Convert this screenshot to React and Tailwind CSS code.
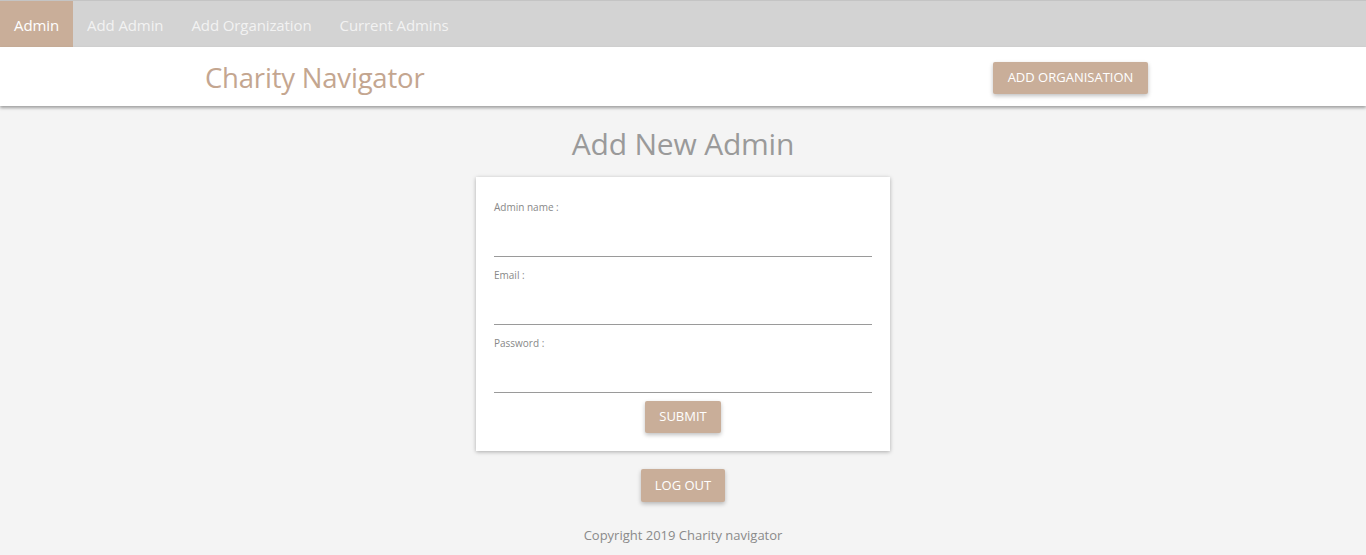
const tabs = ["Admin", "Add Admin", "Add Organization", "Current Admins"];

const fields = [
  { label: "Admin name :", type: "text" },
  { label: "Email :", type: "email" },
  { label: "Password :", type: "password" },
];

const btn =
  "bg-[#c9ae99] text-white uppercase rounded-[2px] shadow-[0_2px_4px_rgba(0,0,0,0.25)]";

const App = () => {
  return (
    <div className="min-h-[555px] bg-[#f4f4f4] font-['Open_Sans',sans-serif]">
      {/* Top tabs */}
      <nav className="flex h-[47px] bg-[#d3d3d3] border-t border-[#c4c4c4]">
        {tabs.map((t, i) => (
          <a
            key={t}
            className={`flex items-center pt-[2px] px-[14px] text-[15px] tracking-[-0.1px] ${
              i === 0 ? "bg-[#c9ae99] text-white" : "text-[#f2f2f2]"
            }`}
          >
            {t}
          </a>
        ))}
      </nav>

      {/* Header */}
      <header className="h-[59px] bg-white shadow-[0_2px_3px_rgba(0,0,0,0.35)] relative">
        <div className="ml-[205px] w-[943px] h-full flex items-center justify-between pt-[2px]">
          <h1 className="text-[27.5px] text-[#c4a690] tracking-[-0.2px]">Charity Navigator</h1>
          <button className={`${btn} h-[32px] w-[155px] text-[13px]`}>Add Organisation</button>
        </div>
      </header>

      {/* Main */}
      <main className="flex flex-col items-center">
        <h2 className="mt-[18px] text-[30px] leading-[40px] text-[#9a9a9a] tracking-[-0.2px]">
          Add New Admin
        </h2>
        <form className="mt-[13px] w-[414px] bg-white shadow-[0_1px_4px_rgba(0,0,0,0.3)] px-[18px] pt-[23px] pb-[18px] flex flex-col">
          <div className="flex flex-col gap-[11px]">
            {fields.map((f) => (
              <label key={f.label} className="flex flex-col">
                <span className="text-[10px] leading-[14px] text-[#888]">{f.label}</span>
                <input
                  type={f.type}
                  className="h-[43px] border-b border-[#9a9a9a] outline-none bg-transparent"
                />
              </label>
            ))}
          </div>
          <button
            type="button"
            className={`${btn} self-center mt-[8px] h-[32px] w-[76px] text-[13px]`}
          >
            Submit
          </button>
        </form>
        <button className={`${btn} mt-[18px] h-[33px] w-[84px] text-[13px]`}>Log out</button>
        <p className="mt-[24px] text-[13px] text-[#8a8a8a]">Copyright 2019 Charity navigator</p>
      </main>
    </div>
  );
};

export default App;
